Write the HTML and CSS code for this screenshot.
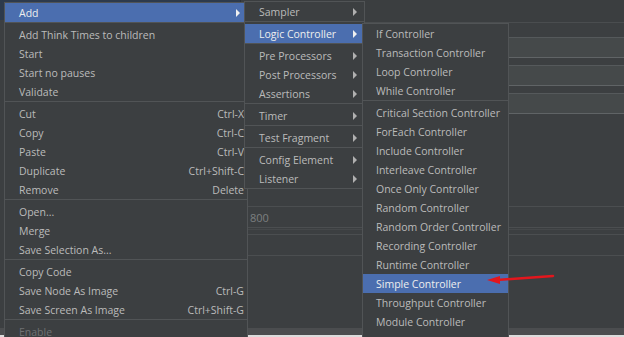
FILE: index.html
```html
<!DOCTYPE html>
<html>
<head>
<meta charset="utf-8">
<link rel="stylesheet" href="styles.css">
</head>
<body>
<div class="app">
  <div class="main">
    <div class="tree">
      <div class="tree-sel"></div>
    </div>
    <div class="right">
      <div class="topbar"></div>
      <div class="content">
        <div class="field"></div>
        <div class="field"></div>
        <div class="field"></div>
        <div class="field lower"><span class="ghost">800</span></div>
        <div class="field thin"></div>
        <div class="field"></div>
      </div>
    </div>
  </div>
  <div class="status"></div>
  <div class="edge"></div>
</div>

<div class="menu m1">
  <div class="item hl"><span class="lbl">Add</span><span class="arr"></span></div>
  <div class="sep"></div>
  <div class="item"><span class="lbl">Add Think Times to children</span></div>
  <div class="item"><span class="lbl">Start</span></div>
  <div class="item"><span class="lbl">Start no pauses</span></div>
  <div class="item"><span class="lbl">Validate</span></div>
  <div class="sep"></div>
  <div class="item"><span class="lbl">Cut</span><span class="sc">Ctrl-X</span></div>
  <div class="item"><span class="lbl">Copy</span><span class="sc">Ctrl-C</span></div>
  <div class="item"><span class="lbl">Paste</span><span class="sc">Ctrl-V</span></div>
  <div class="item"><span class="lbl">Duplicate</span><span class="sc">Ctrl+Shift-C</span></div>
  <div class="item"><span class="lbl">Remove</span><span class="sc">Delete</span></div>
  <div class="sep"></div>
  <div class="item"><span class="lbl">Open...</span></div>
  <div class="item"><span class="lbl">Merge</span></div>
  <div class="item"><span class="lbl">Save Selection As...</span></div>
  <div class="sep"></div>
  <div class="item"><span class="lbl">Copy Code</span></div>
  <div class="item"><span class="lbl">Save Node As Image</span><span class="sc">Ctrl-G</span></div>
  <div class="item"><span class="lbl">Save Screen As Image</span><span class="sc">Ctrl+Shift-G</span></div>
  <div class="sep"></div>
  <div class="item dis"><span class="lbl">Enable</span></div>
</div>

<div class="menu m2">
  <div class="item"><span class="lbl">Sampler</span><span class="arr"></span></div>
  <div class="sep"></div>
  <div class="item hl"><span class="lbl">Logic Controller</span><span class="arr"></span></div>
  <div class="sep"></div>
  <div class="item"><span class="lbl">Pre Processors</span><span class="arr"></span></div>
  <div class="item"><span class="lbl">Post Processors</span><span class="arr"></span></div>
  <div class="item"><span class="lbl">Assertions</span><span class="arr"></span></div>
  <div class="sep"></div>
  <div class="item"><span class="lbl">Timer</span><span class="arr"></span></div>
  <div class="sep"></div>
  <div class="item"><span class="lbl">Test Fragment</span><span class="arr"></span></div>
  <div class="sep"></div>
  <div class="item"><span class="lbl">Config Element</span><span class="arr"></span></div>
  <div class="item"><span class="lbl">Listener</span><span class="arr"></span></div>
</div>

<div class="menu m3">
  <div class="item"><span class="lbl">If Controller</span></div>
  <div class="item"><span class="lbl">Transaction Controller</span></div>
  <div class="item"><span class="lbl">Loop Controller</span></div>
  <div class="item"><span class="lbl">While Controller</span></div>
  <div class="sep"></div>
  <div class="item"><span class="lbl">Critical Section Controller</span></div>
  <div class="item"><span class="lbl">ForEach Controller</span></div>
  <div class="item"><span class="lbl">Include Controller</span></div>
  <div class="item"><span class="lbl">Interleave Controller</span></div>
  <div class="item"><span class="lbl">Once Only Controller</span></div>
  <div class="item"><span class="lbl">Random Controller</span></div>
  <div class="item"><span class="lbl">Random Order Controller</span></div>
  <div class="item"><span class="lbl">Recording Controller</span></div>
  <div class="item"><span class="lbl">Runtime Controller</span></div>
  <div class="item hl"><span class="lbl">Simple Controller</span></div>
  <div class="item"><span class="lbl">Throughput Controller</span></div>
  <div class="item"><span class="lbl">Module Controller</span></div>
  <div class="item"><span class="lbl">Switch Controller</span></div>
</div>

<svg class="pointer" width="80" height="20" viewBox="0 0 80 20">
  <line x1="10" y1="10" x2="66" y2="6" stroke="#e3161d" stroke-width="2.6" stroke-linecap="round"/>
  <polygon points="0,10 13,6 13,14" fill="#e3161d"/>
</svg>
</body>
</html>
```

FILE: styles.css
```css
html, body {
  margin: 0;
  padding: 0;
  width: 624px;
  height: 337px;
  overflow: hidden;
  background: #3c3f41;
  font-family: "Open Sans", "Noto Sans", sans-serif;
  font-size: 10.5px;
  color: #bbbbbb;
}

.app {
  width: 624px;
  height: 337px;
  display: flex;
  flex-direction: column;
}

.main {
  flex: 1;
  display: flex;
  min-height: 0;
}

.tree {
  width: 240px;
  background: #3c3f41;
  border-right: 1px solid #2f3133;
}

.tree-sel {
  height: 20px;
  background: #2d3a4c;
}

.right {
  flex: 1;
  display: flex;
  flex-direction: column;
}

.topbar {
  height: 22px;
  background: #3b3e40;
  border-bottom: 1px solid #4a4d4f;
}

.content {
  flex: 1;
  padding-top: 14px;
  display: flex;
  flex-direction: column;
}

.field {
  height: 19px;
  background: #45494a;
  border-top: 1px solid #55595b;
  border-bottom: 1px solid #606466;
  margin-bottom: 7px;
}

.field.lower {
  margin-top: 85px;
  margin-bottom: 0;
  height: 20px;
  background: #3c3f41;
  border-top: 1px solid #4b4e50;
  border-bottom: 1px solid #4b4e50;
  display: flex;
  align-items: center;
  padding-left: 9px;
}

.field.thin {
  height: 4px;
  margin: 1px 0 0 0;
  background: #3c3f41;
  border-top: 1px solid #45484a;
  border-bottom: 1px solid #4b4e50;
}

.field.thin + .field {
  height: 20px;
  background: #3c3f41;
  border-top: none;
  border-bottom: 1px solid #4b4e50;
}

.ghost {
  color: #7d7f80;
  font-size: 11px;
}

.status {
  height: 7px;
  background: #4b4d4f;
}

.edge {
  height: 2px;
  background: #dcdcdc;
}

/* menus */
.menu {
  position: absolute;
  background: #3c3f41;
  border: 1px solid #515456;
  box-sizing: border-box;
  display: flex;
  flex-direction: column;
  overflow: hidden;
}

.m1 {
  left: 4px;
  top: 2px;
  width: 244px;
  height: 345px;
}

.m2 {
  left: 244px;
  top: 1px;
  width: 121px;
  height: 188px;
}

.m3 {
  left: 362px;
  top: 23px;
  width: 147px;
  height: 330px;
}

.item {
  height: 19px;
  flex: none;
  display: flex;
  align-items: center;
  padding: 0 3px 0 14px;
  white-space: nowrap;
}

.m3 .item {
  padding-left: 13px;
}

.lbl {
  flex: 1;
}

.sc {
  color: #bbbbbb;
}

.item.hl {
  background: #4b6eaf;
  color: #eeeeee;
}

.item.dis {
  color: #6f7173;
}

.arr {
  width: 0;
  height: 0;
  border-left: 4px solid #b0b0b0;
  border-top: 4px solid transparent;
  border-bottom: 4px solid transparent;
  margin-right: 4px;
}

.item.hl .arr {
  border-left-color: #f0f0f0;
}

.sep {
  flex: none;
  height: 0;
  border-top: 1px solid #515456;
  margin-bottom: 2px;
}

.pointer {
  position: absolute;
  left: 487px;
  top: 270px;
}
```
